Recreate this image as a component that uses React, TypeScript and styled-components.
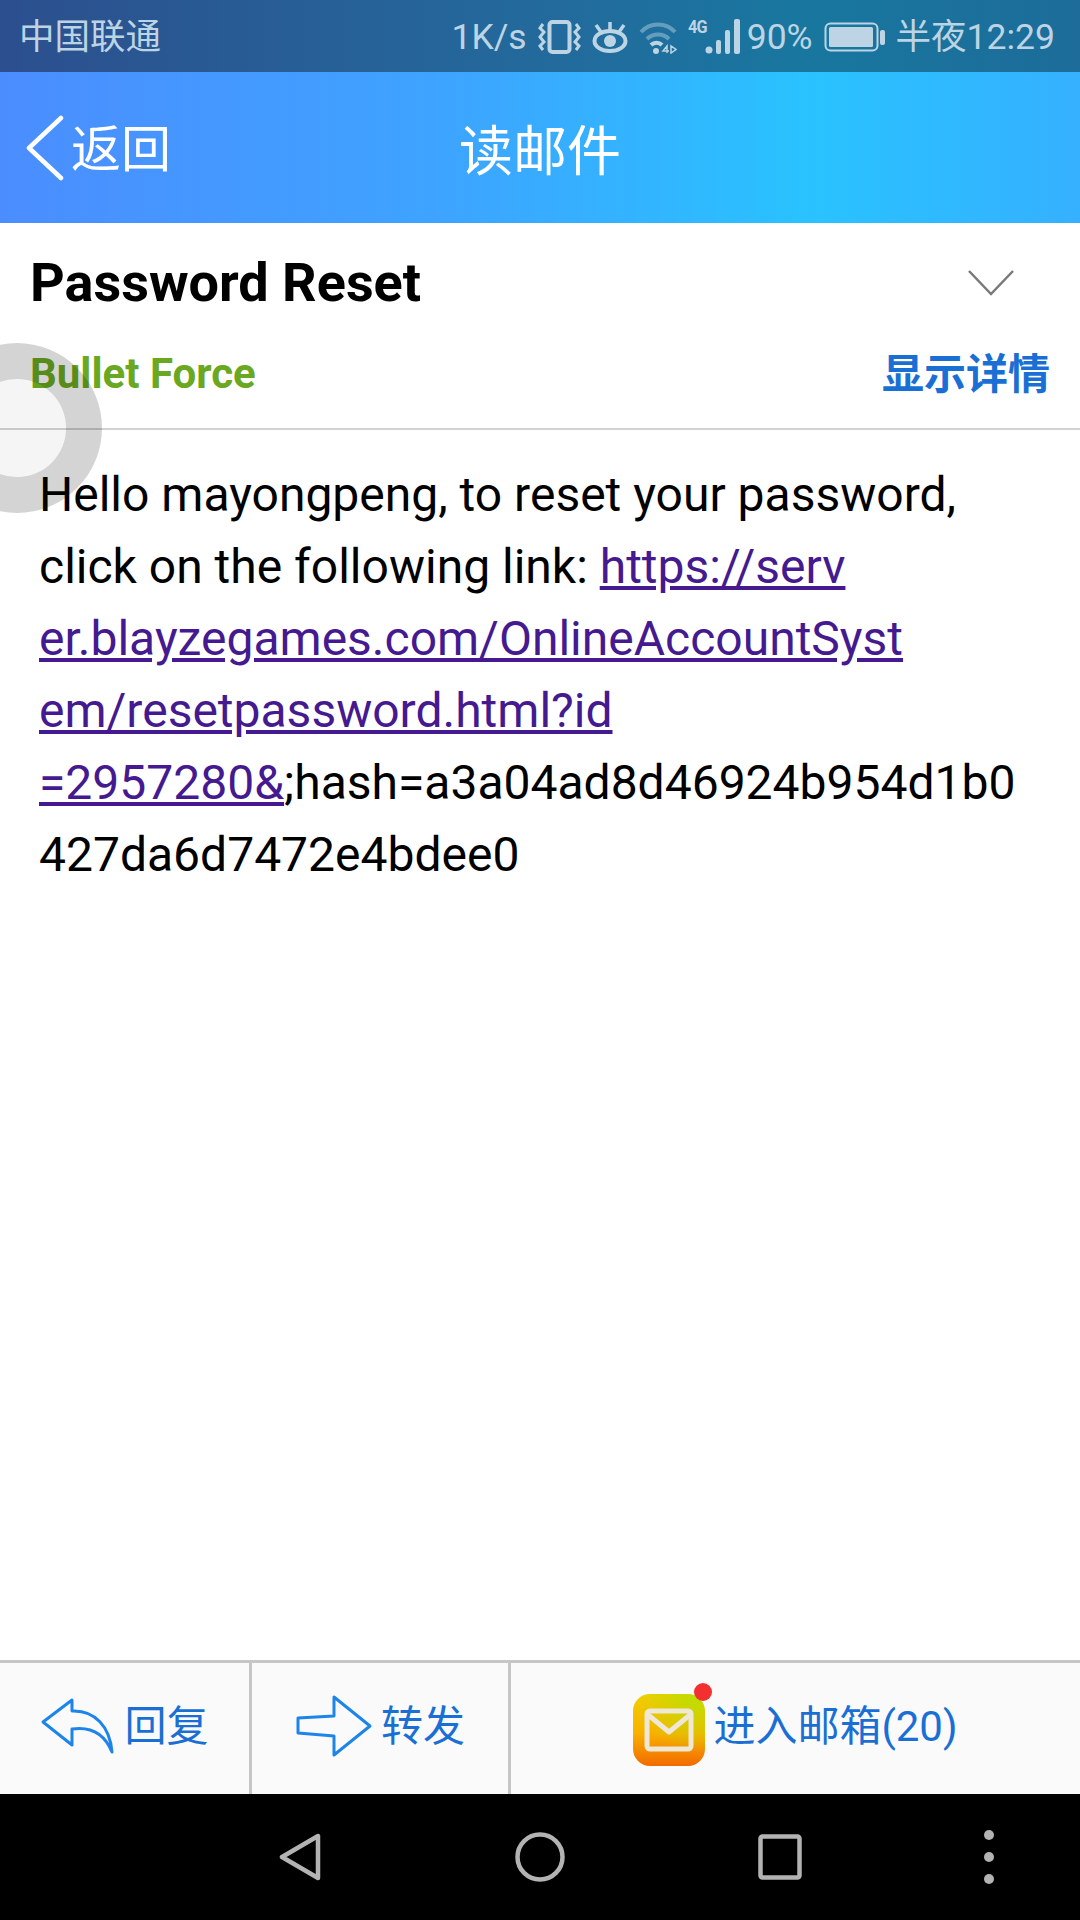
import React from "react";
import styled, { createGlobalStyle } from "styled-components";

const Global = createGlobalStyle`
  html, body { margin: 0; padding: 0; background: #fff; }
  * { box-sizing: border-box; }
  body { font-family: Roboto, "Noto Sans CJK SC", sans-serif; }
`;

const Page = styled.div`
  position: relative;
  width: 1080px;
  height: 1920px;
  display: flex;
  flex-direction: column;
  overflow: hidden;
  background: #fff;
`;

const StatusBar = styled.div`
  height: 72px;
  flex: none;
  display: flex;
  align-items: center;
  justify-content: space-between;
  padding: 2px 25px 0 19px;
  background: linear-gradient(90deg, #2c4f8e 0%, #236a9c 50%, #18779f 75%, #1d6c99 100%);
  color: #bcd4e4;
`;

const StatusText = styled.span`
  font-size: 35.5px;
  line-height: 44px;
  white-space: nowrap;
`;

const StatusGroup = styled.div`
  display: flex;
  align-items: center;
  gap: 11px;
`;

const SignalWrap = styled.div`
  position: relative;
  flex: none;
  width: 53px;
  height: 36px;
  margin-right: -5px;
`;

const NetworkTag = styled.span`
  position: absolute;
  left: 0;
  top: -2px;
  font-size: 18px;
  line-height: 20px;
  font-weight: 700;
  letter-spacing: -1px;
  transform: scaleX(0.9);
  transform-origin: left center;
`;

const NavBar = styled.div`
  position: relative;
  height: 151px;
  flex: none;
  display: flex;
  align-items: center;
  justify-content: center;
  background: linear-gradient(90deg, #4b8dff 0%, #3ea3ff 40%, #29c2ff 75%, #35b0fe 100%);
  color: #fff;
`;

const BackLink = styled.div`
  position: absolute;
  left: 25px;
  top: 0;
  bottom: 0;
  display: flex;
  align-items: center;
  gap: 6px;
  font-size: 50px;
`;

const BackLabel = styled.span`
  margin-top: -6px;
`;

const NavTitle = styled.div`
  font-size: 54px;
  font-weight: 400;
`;

const Header = styled.div`
  flex: none;
  height: 207px;
  padding: 29px 30px 0 30px;
  border-bottom: 2px solid #d2d2d2;
`;

const HeaderRow = styled.div<{ $gap?: number }>`
  display: flex;
  align-items: center;
  justify-content: space-between;
  height: 60px;
  margin-top: ${(p) => p.$gap ?? 0}px;
`;

const Subject = styled.div`
  font-size: 54px;
  font-weight: 700;
  color: #000;
`;

const Sender = styled.div`
  font-size: 42px;
  font-weight: 700;
  color: #69a820;
`;

const Details = styled.div`
  font-size: 42px;
  font-weight: 700;
  color: #1a6fd4;
  margin-top: -6px;
`;

const Chevron = styled.svg`
  margin-right: 36px;
`;

const Body = styled.div`
  flex: 1;
  padding: 29px 0 0 39px;
  font-size: 48px;
  line-height: 72px;
  color: #000;
  white-space: nowrap;
`;

const MailLink = styled.a`
  color: #451a90;
  text-decoration: underline;
`;

const Toolbar = styled.div`
  flex: none;
  height: 134px;
  display: grid;
  grid-template-columns: 252px 259px 1fr;
  background: #fafafa;
  border-top: 3px solid #c6c6c6;
`;

const ToolButton = styled.div<{ $divider?: boolean; $gap: number }>`
  display: flex;
  align-items: center;
  justify-content: center;
  gap: ${(p) => p.$gap}px;
  font-size: 42px;
  color: #1a6fd4;
  padding-bottom: 6px;
  border-right: ${(p) => (p.$divider ? "3px solid #c6c6c6" : "none")};
`;

const ToolLabel = styled.span`
  margin-top: -6px;
`;

const MailIcon = styled.div`
  position: relative;
  flex: none;
  width: 72px;
  height: 72px;
  margin-top: 8px;
  border-radius: 17px;
  display: flex;
  align-items: center;
  justify-content: center;
  background:
    radial-gradient(circle at 85% 5%, #bedc00 0%, rgba(190, 220, 0, 0) 60%),
    linear-gradient(180deg, #f0d000 0%, #f8b000 55%, #f26a00 100%);
`;

const Badge = styled.span`
  position: absolute;
  top: -11px;
  right: -7px;
  width: 18px;
  height: 18px;
  border-radius: 50%;
  background: #f23030;
`;

const SystemNav = styled.div`
  flex: none;
  height: 126px;
  display: flex;
  align-items: center;
  padding-left: 279px;
  background: #000;
`;

const SysIcon = styled.svg<{ $left?: number }>`
  flex: none;
  margin-left: ${(p) => p.$left ?? 0}px;
`;

const TouchRing = styled.div`
  position: absolute;
  left: -68px;
  top: 343px;
  width: 170px;
  height: 170px;
  border-radius: 50%;
  border: 36px solid rgba(0, 0, 0, 0.17);
  background: rgba(0, 0, 0, 0.04);
  background-clip: padding-box;
  pointer-events: none;
`;

const ink = "#bcd4e4";

export default function App() {
  return (
    <Page>
      <Global />
      <StatusBar>
        <StatusText>中国联通</StatusText>
        <StatusGroup>
          <StatusText>1K/s</StatusText>
          <svg width="43" height="34" viewBox="0 0 43 34" fill="none" stroke={ink}>
            <rect x="11.500" y="2" width="20" height="30" rx="3" strokeWidth="4" />
            <path d="M5 4l-3 4 4 4-4 5 4 5-4 4 3 4M38 4l3 4-4 4 4 5-4 5 4 4-3 4" strokeWidth="3" />
          </svg>
          <svg width="36" height="32" viewBox="0 0 36 32" fill="none" stroke={ink}>
            <ellipse cx="18" cy="20" rx="15.500" ry="10" strokeWidth="4" />
            <circle cx="18" cy="20" r="6" fill={ink} stroke="none" />
            <path d="M18 9V1M9 11L4 4M27 11l5-7" strokeWidth="3.500" />
          </svg>
          <svg width="38" height="34" viewBox="0 0 38 34" fill="none" stroke={ink}>
            <path d="M2 12C11 2 27 2 36 12" strokeWidth="4" opacity=".45" />
            <path d="M8 19c6-6 16-6 22 0" strokeWidth="4" opacity=".45" />
            <path d="M12 25c3-3 8-3 11 0" strokeWidth="4" />
            <circle cx="17" cy="31" r="3" fill={ink} stroke="none" />
            <path d="M28 33v-7l-4 5h6M32 26v7l5-3.500z" strokeWidth="1.500" />
          </svg>
          <SignalWrap>
            <NetworkTag>4G</NetworkTag>
            <svg width="53" height="36" viewBox="0 0 53 36">
              <circle cx="21" cy="31" r="3.500" fill={ink} />
              <rect x="28" y="21" width="5" height="14" rx="2" fill={ink} />
              <rect x="37" y="11" width="5" height="24" rx="2" fill={ink} />
              <rect x="46" y="0" width="6" height="35" rx="2" fill={ink} />
            </svg>
          </SignalWrap>
          <StatusText>90%</StatusText>
          <svg width="61" height="30" viewBox="0 0 61 30" fill="none">
            <rect x="1.500" y="1.500" width="52" height="27" rx="5" stroke={ink} strokeWidth="2" />
            <rect x="5" y="5" width="44" height="20" rx="1.500" fill={ink} />
            <rect x="56" y="8" width="5" height="15" rx="2" fill={ink} />
          </svg>
          <StatusText>半夜12:29</StatusText>
        </StatusGroup>
      </StatusBar>

      <NavBar>
        <BackLink>
          <svg width="40" height="66" viewBox="0 0 40 66" fill="none" stroke="#fff" strokeWidth="4.500" strokeLinecap="round" strokeLinejoin="round">
            <path d="M36 3L4 33l32 30" />
          </svg>
          <BackLabel>返回</BackLabel>
        </BackLink>
        <NavTitle>读邮件</NavTitle>
      </NavBar>

      <Header>
        <HeaderRow>
          <Subject>Password Reset</Subject>
          <Chevron width="46" height="27" viewBox="0 0 46 27" fill="none" stroke="#77797c" strokeWidth="2.500">
            <path d="M1 2l22 23L45 2" />
          </Chevron>
        </HeaderRow>
        <HeaderRow $gap={31}>
          <Sender>Bullet Force</Sender>
          <Details>显示详情</Details>
        </HeaderRow>
      </Header>

      <Body>
        Hello mayongpeng, to reset your password,
        <br />
        click on the following link: <MailLink>https://serv</MailLink>
        <br />
        <MailLink>er.blayzegames.com/OnlineAccountSyst</MailLink>
        <br />
        <MailLink>em/resetpassword.html?id</MailLink>
        <br />
        <MailLink>=2957280&amp;</MailLink>;hash=a3a04ad8d46924b954d1b0
        <br />
        427da6d7472e4bdee0
      </Body>

      <Toolbar>
        <ToolButton $divider $gap={9}>
          <svg width="75" height="58" viewBox="0 0 75 58" fill="none" stroke="#1d84ea" strokeWidth="3" strokeLinejoin="round">
            <path d="M32 3L3 25l29 23V32c20-3 33 6 40 23C70 30 55 13 32 14z" />
          </svg>
          <ToolLabel>回复</ToolLabel>
        </ToolButton>
        <ToolButton $divider $gap={8}>
          <svg width="78" height="64" viewBox="0 0 78 64" fill="none" stroke="#1d84ea" strokeWidth="3" strokeLinejoin="round">
            <path d="M39 3l36 29-36 29V42L3 39V24l36-2z" />
          </svg>
          <ToolLabel>转发</ToolLabel>
        </ToolButton>
        <ToolButton $gap={8}>
          <MailIcon>
            <svg width="50" height="44" viewBox="0 0 50 44" fill="none" stroke="#efe8d6" strokeWidth="5" strokeLinejoin="round">
              <rect x="3" y="3" width="44" height="38" rx="3" />
              <path d="M3 6l22 18L47 6" />
            </svg>
            <Badge />
          </MailIcon>
          <ToolLabel>进入邮箱(20)</ToolLabel>
        </ToolButton>
      </Toolbar>

      <SystemNav>
        <SysIcon width="42" height="48" viewBox="0 0 42 48" fill="none" stroke="#b3b3b3" strokeWidth="4.500" strokeLinejoin="round">
          <path d="M39 3v42L3 24z" />
        </SysIcon>
        <SysIcon $left={194} width="50" height="50" viewBox="0 0 50 50" fill="none" stroke="#b3b3b3" strokeWidth="4.500">
          <circle cx="25" cy="25" r="22.500" />
        </SysIcon>
        <SysIcon $left={193} width="44" height="46" viewBox="0 0 44 46" fill="none" stroke="#b3b3b3" strokeWidth="4.500" strokeLinejoin="round">
          <rect x="2.500" y="2.500" width="39" height="41" rx="2" />
        </SysIcon>
        <SysIcon $left={182} width="10" height="54" viewBox="0 0 10 54" fill="#b3b3b3">
          <circle cx="5" cy="5" r="5" />
          <circle cx="5" cy="27" r="5" />
          <circle cx="5" cy="49" r="5" />
        </SysIcon>
      </SystemNav>

      <TouchRing />
    </Page>
  );
}
